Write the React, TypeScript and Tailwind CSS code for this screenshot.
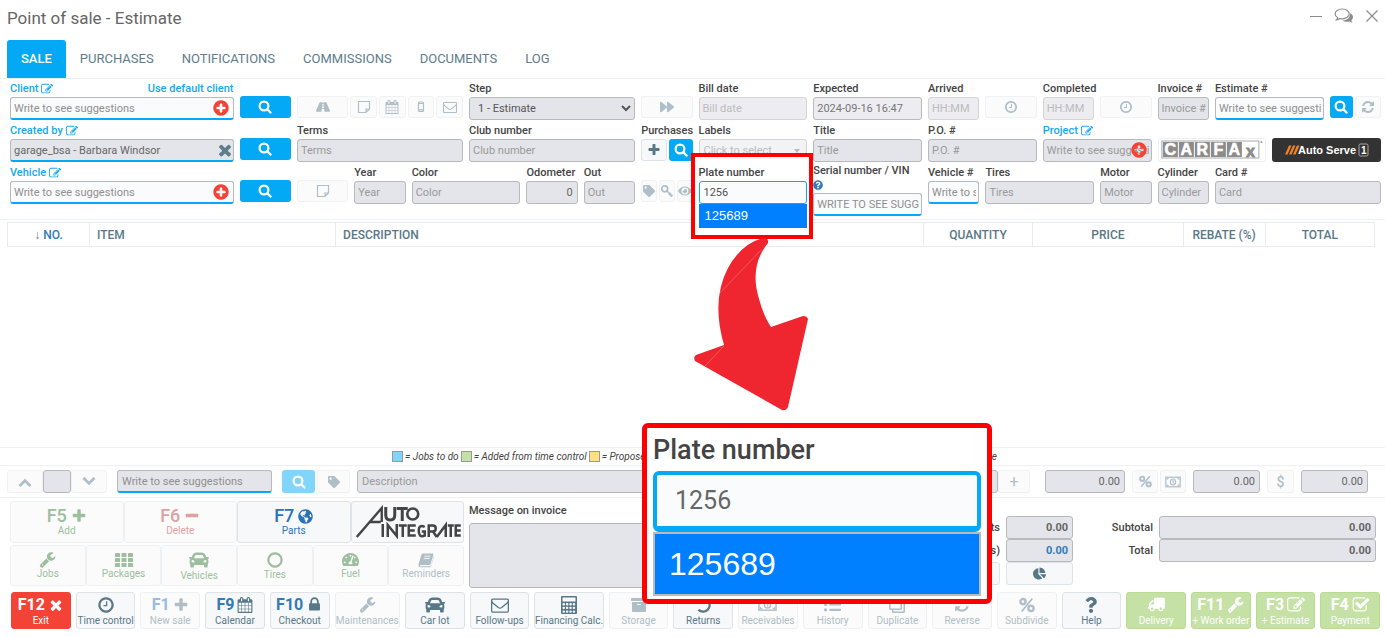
import React, { useId } from 'react';
import {
  FaArchive, FaCar, FaChartPie, FaEye, FaForward, FaGlobeAmericas,
  FaListUl, FaQuestion, FaQuestionCircle, FaRegClone, FaRoad, FaTachometerAlt, FaTag, FaTruck, FaUndo,
} from 'react-icons/fa';

const RING = 'q0 209-103 385.5t-279.5 279.5-385.5 103-385.5-103-279.5-279.5-103-385.5 103-385.5 279.5-279.5 385.5-103 385.5 103 279.5 279.5 103 385.5z';

const paths = {
  search: 'M1216 832q0-185-131.5-316.5t-316.5-131.5-316.5 131.5-131.5 316.5 131.5 316.5 316.5 131.5 316.5-131.5 131.5-316.5zm512 832q0 52-38 90t-90 38q-54 0-90-38l-343-342q-179 124-399 124-143 0-273.5-55.5t-225-150-150-225-55.5-273.5 55.5-273.5 150-225 225-150 273.5-55.5 273.5 55.5 225 150 150 225 55.5 273.5q0 220-124 399l343 343q37 37 37 90z',
  plus: 'M1600 736v192q0 40-28 68t-68 28h-416v416q0 40-28 68t-68 28h-192q-40 0-68-28t-28-68v-416h-416q-40 0-68-28t-28-68v-192q0-40 28-68t68-28h416v-416q0-40 28-68t68-28h192q40 0 68 28t28 68v416h416q40 0 68 28t28 68z',
  minus: 'M1600 736v192q0 40-28 68t-68 28h-1216q-40 0-68-28t-28-68v-192q0-40 28-68t68-28h1216q40 0 68 28t28 68z',
  times: 'M1490 1322q0 40-28 68l-136 136q-28 28-68 28t-68-28l-294-294-294 294q-28 28-68 28t-68-28l-136-136q-28-28-28-68t28-68l294-294-294-294q-28-28-28-68t28-68l136-136q28-28 68-28t68 28l294 294 294-294q28-28 68-28t68 28l136 136q28 28 28 68t-28 68l-294 294 294 294q28 28 28 68z',
  edit: 'M888 1184l116-116-152-152-116 116v56h96v96h56zm440-720q-16-16-33 1l-350 350q-17 17-1 33t33-1l350-350q17-17 1-33zm80 594v190q0 119-84.5 203.5t-203.5 84.5h-832q-119 0-203.5-84.5t-84.5-203.5v-832q0-119 84.5-203.5t203.5-84.5h832q63 0 117 25 15 7 18 23 3 17-9 29l-49 49q-14 14-32 8-23-6-45-6h-832q-66 0-113 47t-47 113v832q0 66 47 113t113 47h832q66 0 113-47t47-113v-126q0-13 9-22l64-64q15-15 35-7t20 29zm-96-738l288 288-672 672h-288v-288zm444 132l-92 92-288-288 92-92q28-28 68-28t68 28l152 152q28 28 28 68t-28 68z',
  wrench: 'M448 1472q0-26-19-45t-45-19-45 19-19 45 19 45 45 19 45-19 19-45zm644-420l-682 682q-37 37-90 37-52 0-91-37l-106-108q-38-36-38-90 0-53 38-91l681-681q39 98 114.5 173.5t173.5 114.5zm634-435q0 39-23 106-47 134-164.5 217.5t-258.5 83.5q-185 0-316.5-131.5t-131.5-316.5 131.5-316.5 316.5-131.5q58 0 121.5 16.5t107.5 46.5q16 11 16 28t-16 28l-293 169v224l193 107q5-3 79-48.5t135.5-81 70.5-35.5q15 0 23.5 10t8.5 25z',
  clock: 'M1024 544v448q0 14-9 23t-23 9h-320q-14 0-23-9t-9-23v-64q0-14 9-23t23-9h224v-352q0-14 9-23t23-9h64q14 0 23 9t9 23zm416 352q0-148-73-273t-198-198-273-73-273 73-198 198-73 273 73 273 198 198 273 73 273-73 198-198 73-273zm224 0' + RING,
  circle: 'M896 352q-148 0-273 73t-198 198-73 273 73 273 198 198 273 73 273-73 198-198 73-273-73-273-198-198-273-73zm768 544' + RING,
  plusCircle: 'M1344 960v-128q0-26-19-45t-45-19h-256v-256q0-26-19-45t-45-19h-128q-26 0-45 19t-19 45v256h-256q-26 0-45 19t-19 45v128q0 26 19 45t45 19h256v256q0 26 19 45t45 19h128q26 0 45-19t19-45v-256h256q26 0 45-19t19-45zm320-64' + RING,
  calendar: 'M192 1664h288v-288h-288v288zm352 0h320v-288h-320v288zm-352-352h288v-320h-288v320zm352 0h320v-320h-320v320zm-352-384h288v-288h-288v288zm736 736h320v-288h-320v288zm-384-736h320v-288h-320v288zm768 736h288v-288h-288v288zm-384-352h320v-320h-320v320zm-352-864v-288q0-13-9.5-22.5t-22.5-9.5h-64q-13 0-22.5 9.5t-9.5 22.5v288q0 13 9.5 22.5t22.5 9.5h64q13 0 22.5-9.5t9.5-22.5zm736 864h288v-320h-288v320zm-384-384h320v-288h-320v288zm384 0h288v-288h-288v288zm32-480v-288q0-13-9.5-22.5t-22.5-9.5h-64q-13 0-22.5 9.5t-9.5 22.5v288q0 13 9.5 22.5t22.5 9.5h64q13 0 22.5-9.5t9.5-22.5zm384-64v1280q0 52-38 90t-90 38h-1408q-52 0-90-38t-38-90v-1280q0-52 38-90t90-38h128v-96q0-66 47-113t113-47h64q66 0 113 47t47 113v96h384v-96q0-66 47-113t113-47h64q66 0 113 47t47 113v96h128q52 0 90 38t38 90z',
  envelope: 'M1664 1504v-768q-32 36-69 66-268 206-426 338-51 43-83 67t-86.5 48.5-102.5 24.5h-2q-48 0-102.5-24.5t-86.5-48.5-83-67q-158-132-426-338-37-30-69-66v768q0 13 9.5 22.5t22.5 9.5h1472q13 0 22.5-9.5t9.5-22.5zm0-1051v-24.5l-.5-13-3-12.5-5.5-9-9-7.5-14-2.5h-1472q-13 0-22.5 9.5t-9.5 22.5q0 168 147 284 193 152 401 317 6 5 35 29.5t46 37.5 44.5 31.5 50.5 27.5 43 9h2q20 0 43-9t50.5-27.5 44.5-31.5 46-37.5 35-29.5q208-165 401-317 54-43 100.5-115.5t46.5-131.5zm128-37v1088q0 66-47 113t-113 47h-1472q-66 0-113-47t-47-113v-1088q0-66 47-113t113-47h1472q66 0 113 47t47 113z',
  lock: 'M640 768h512v-192q0-106-75-181t-181-75-181 75-75 181v192zm832 96v576q0 40-28 68t-68 28h-960q-40 0-68-28t-28-68v-576q0-40 28-68t68-28h32v-192q0-184 132-316t316-132 316 132 132 316v192h32q40 0 68 28t28 68z',
  chevron: 'M1683 1331l-166 165q-19 19-45 19t-45-19l-531-531-531 531q-19 19-45 19t-45-19l-166-165q-19-19-19-45.5t19-45.5l742-741q19-19 45-19t45 19l742 741q19 19 19 45.5t-19 45.5z',
  check: 'M1472 930v318q0 119-84.5 203.5t-203.5 84.5h-832q-119 0-203.5-84.5t-84.5-203.5v-832q0-119 84.5-203.5t203.5-84.5h832q63 0 117 25 15 7 18 23 3 17-9 29l-49 49q-10 10-23 10-3 0-9-2-23-6-45-6h-832q-66 0-113 47t-47 113v832q0 66 47 113t113 47h832q66 0 113-47t47-113v-254q0-13 9-22l64-64q10-10 23-10 6 0 12 3 20 8 20 29zm231-489l-814 814q-24 24-57 24t-57-24l-430-430q-24-24-24-57t24-57l110-110q24-24 57-24t57 24l263 263 647-647q24-24 57-24t57 24l110 110q24 24 24 57t-24 57z',
  refresh: 'M1639 1056q0 5-1 7-64 268-268 434.5t-478 166.5q-146 0-282.5-55t-243.5-157l-129 129q-19 19-45 19t-45-19-19-45v-448q0-26 19-45t45-19h448q26 0 45 19t19 45-19 45l-137 137q71 66 161 102t187 36q134 0 250-65t186-179q11-17 53-117 8-23 30-23h192q13 0 22.5 9.5t9.5 22.5zm25-800v448q0 26-19 45t-45 19h-448q-26 0-45-19t-19-45 19-45l138-138q-148-137-349-137-134 0-250 65t-186 179q-11 17-53 117-8 23-30 23h-199q-13 0-22.5-9.5t-9.5-22.5v-7q65-268 270-434.5t480-166.5q146 0 284 55.5t245 156.5l130-129q19-19 45-19t45 19 19 45z',
};

function Icon({ name, className = 'size-4' }: { name: keyof typeof paths; className?: string }) {
  return (
    <svg viewBox="0 0 1792 1792" fill="currentColor" className={className} aria-hidden="true">
      <path d={paths[name]} />
    </svg>
  );
}

const Search = () => (
  <svg viewBox="0 0 14 14" fill="none" stroke="currentColor" strokeWidth="2.2" strokeLinecap="round" className="size-3.5" aria-hidden="true">
    <circle cx="6" cy="6" r="4.400" />
    <path d="M9.500 9.500l3 3" strokeWidth="2.400" />
  </svg>
);
const Note = ({ className = 'size-3.5' }) => (
  <svg viewBox="0 0 14 14" fill="none" stroke="currentColor" strokeWidth="1.2" className={className}>
    <path d="M1.5 1.5h11v7.5l-3.5 3.5h-7.5zM12.5 9H9v3.5" />
  </svg>
);
const Mobile = () => (
  <svg viewBox="0 0 14 14" fill="none" stroke="currentColor" strokeWidth="1.2" className="size-3.5">
    <rect x="4.5" y="2" width="5" height="9.5" rx="1" />
    <path d="M4.5 3.5h5M4.5 9.8h5" />
  </svg>
);
const Key = () => (
  <svg viewBox="0 0 14 14" fill="none" stroke="currentColor" strokeWidth="1.7" className="size-3.5">
    <circle cx="4.8" cy="4.8" r="3" />
    <path d="M7 7l5.5 5.5M9 11l2-2M10.8 12.6l1.8-1.8" />
  </svg>
);
const Percent = ({ className = 'size-4' }) => (
  <svg viewBox="0 0 16 16" fill="none" stroke="currentColor" strokeWidth="2.4" className={className}>
    <circle cx="4" cy="4.6" r="2.6" />
    <circle cx="12" cy="11.4" r="2.6" />
    <path d="M13.3 1.5L2.7 14.5" strokeWidth="1.8" />
  </svg>
);
const Money = ({ className = 'size-4' }) => (
  <svg viewBox="0 0 16 16" fill="none" stroke="currentColor" strokeWidth="1.2" className={className}>
    <rect x=".8" y="3.2" width="14.4" height="9.6" />
    <ellipse cx="8" cy="8" rx="2.6" ry="3" />
    <path d="M7.2 7l1-.8v3.6M2 6V4.5h1.6M14 6V4.5h-1.6M2 10v1.5h1.6M14 10v1.5h-1.6" strokeWidth=".9" />
  </svg>
);
const Dots = () => (
  <svg viewBox="0 0 18 16" fill="currentColor" className="h-4 w-[18px]">
    {[1, 6, 11].map((y) => [0, 6.5, 13].map((x) => <rect key={`${x}-${y}`} x={x} y={y} width="5" height="4" rx=".6" />))}
  </svg>
);
const Book = () => (
  <svg viewBox="0 0 16 16" className="size-4">
    <path d="M5.200 1.500h9.600q.9.300.6 1.200L12.600 12q-.3 1-1.400 1H2.500q-1 .4-.4 1.300h9.500q1.200 0 1.600-1.200L15.800 4l.1.900-2.700 9q-.5 1.400-1.900 1.400H2.400Q.2 14.600.3 12.900L3.400 2.800q.5-1.300 1.800-1.300z" fill="currentColor" />
    <path d="M6.300 4.200h6M5.700 6.400h6" stroke="#fbfbfc" strokeWidth=".9" />
  </svg>
);
const Calculator = () => (
  <svg viewBox="0 0 16 18" className="h-[18px] w-4">
    <rect x="0" y="0" width="16" height="18" rx="1" fill="currentColor" />
    <rect x="1.500" y="1.500" width="13" height="4" fill="#f6f8fa" />
    {[7, 10.700, 14.400].map((y) => [1.500, 4.900, 8.300, 11.700].map((x) => (
      <rect key={`${x}-${y}`} x={x} y={y} width="2.500" height="2.400" rx="1" fill="#f6f8fa" />
    )))}
  </svg>
);
const Chats = () => (
  <svg viewBox="0 0 20 16" className="h-4 w-5">
    <path d="M16 5.2c2 .8 3 2.3 3 3.9 0 1.300-.7 2.500-1.700 3.400.2.900.7 1.500 1.400 2.200-1.400 0-2.600-.4-3.500-1.100-2.600.5-5.200 0-6.700-1.400 4.200.2 7.900-2 7.500-7z" fill="#8d8d8d" />
    <path d="M8.200 1c4 0 7 2.200 7 4.900s-3 4.900-7 4.900c-.8 0-1.500-.1-2.200-.2-1 .7-2.200 1.200-3.500 1.200.7-.6 1.100-1.300 1.300-2.100C2.100 8.800 1.100 7.400 1.100 5.900 1.100 3.200 4.200 1 8.200 1z" fill="#fff" stroke="#8d8d8d" strokeWidth="1.200" />
  </svg>
);

const GRAY = 'border-[#b8b9bb] bg-[#e4e5ea] text-[#666] placeholder:text-[#999]';
const BLUE = 'border-[#b8b9bb] border-b-2 border-b-[#03a9f4] bg-[#fafbfc] text-[#666] placeholder:text-[#8f8f8f]';
const BLUEGRAY = 'border-[#b8b9bb] border-b-2 border-b-[#03a9f4] bg-[#e4e5ea] text-[#666] placeholder:text-[#8f8f8f]';
const DIM = 'border-[#d3d4d6] bg-[#ededf1] text-[#888] placeholder:text-[#bbb]';
const INPUT = 'block h-[23px] w-full min-w-0 rounded-[3px] border text-[11px] leading-4 outline-none ';
const LIGHT = 'flex items-center justify-center rounded-[3px] border border-[#f0f1f3] bg-[#fbfbfc] text-[#aebfc8] ';

type FieldProps = {
  label: string; span: string; tone?: string; ph?: string; value?: string;
  edit?: boolean; side?: string; right?: boolean; icon?: 'add' | 'clear';
};

function Field({ label, span, tone = GRAY, ph, value, edit, side, right, icon }: FieldProps) {
  const id = useId();
  return (
    <div className={span}>
      <div className={'flex h-4 items-center justify-between whitespace-nowrap text-[11px] font-medium ' + (edit ? 'text-[#17a8ee]' : 'text-[#444]')}>
        <label htmlFor={id} className="flex items-center gap-[3px]">
          {label}
          {edit && <Icon name="edit" className="size-3" />}
        </label>
        {side && <a href="#default">{side}</a>}
      </div>
      <div className="relative">
        <input
          id={id}
          placeholder={ph}
          defaultValue={value}
          className={INPUT + (right ? 'px-1 text-right ' : 'pr-0.5 pl-[3px] ') + tone}
        />
        {icon === 'add' && (
          <button type="button" aria-label={'Add ' + label} className="absolute top-0.5 right-1 text-[#f44336]">
            <Icon name="plusCircle" className="size-[18px]" />
          </button>
        )}
        {icon === 'clear' && (
          <button type="button" aria-label={'Clear ' + label} className="absolute top-0.5 right-0 text-[#607d8b]">
            <Icon name="times" className="size-[18px]" />
          </button>
        )}
      </div>
    </div>
  );
}

const SearchButton = ({ className = 'w-full' }) => (
  <button type="button" aria-label="Search" className={'flex h-[22px] items-center justify-center rounded-[3px] bg-[#03a9f4] text-white ' + className}>
    <Search />
  </button>
);

const Slot = ({ span, children }: { span: string; children: React.ReactNode }) => (
  <div className={'flex gap-0.5 pt-[15px] ' + span}>{children}</div>
);

const Light = ({ label, children, grow = 'grow' }: { label: string; children: React.ReactNode; grow?: string }) => (
  <button type="button" aria-label={label} className={LIGHT + 'h-[22px] min-w-0 basis-0 ' + grow}>{children}</button>
);

const ROW = 'grid h-[42px] grid-cols-[repeat(24,minmax(0,1fr))] gap-x-1.5';

function Carfax() {
  return (
    <svg viewBox="0 0 104 22" className="h-[22px] w-full">
      <g fontFamily="Liberation Sans, sans-serif" fontWeight="700" fontSize="16" textAnchor="middle">
        <rect x="1.500" y="2" width="97" height="17" fill="#fff" stroke="#aaa" strokeWidth="1" />
        {['C', 'A', 'R', 'F', 'A'].map((letter, i) => (
          <g key={i}>
            <rect x={2.500 + i * 16} y="3" width="15" height="15" fill="#8b8b8b" />
            <text x={10 + i * 16} y="16" fill="#fff" stroke="#fff" strokeWidth=".6">{letter}</text>
          </g>
        ))}
        <text x="90" y="18" fill="#8b8b8b" stroke="#8b8b8b" strokeWidth=".8">x</text>
      </g>
      <circle cx="101" cy="3" r="1" fill="#999" />
    </svg>
  );
}

function AutoServe() {
  return (
    <svg viewBox="0 0 84 16" className="h-4 w-[84px]">
      <path d="M0 12.500L4 3.500h2.500L2.500 12.500zM4 12.500l4-9h2.500l-4 9zM8 12.500l4-9h2.500l-4 9z" fill="#f58220" />
      <text x="13" y="12" fill="#fff" fontFamily="Liberation Sans, sans-serif" fontSize="11" fontWeight="700">Auto Serve</text>
      <rect x="74" y="2" width="9" height="12" rx="1.500" fill="none" stroke="#aaa" />
      <text x="76" y="12" fill="#fff" fontFamily="Liberation Sans, sans-serif" fontSize="10" fontWeight="700">1</text>
    </svg>
  );
}

function AutoIntegrate() {
  return (
    <svg viewBox="0 0 106 34" fill="none" stroke="#444" strokeWidth="3" className="h-[34px] w-full" aria-label="Auto Integrate">
      <path d="M2 32L27 3v14M14 17h12" strokeWidth="2.400" />
      <path d="M31 2v8q0 5 4.500 5t4.500-5V2M42 3.500h11M47.500 3v13" />
      <circle cx="58" cy="9" r="5.500" strokeWidth="2.600" />
      <path d="M28 19v13M33 32V20l9 11V19M44 20.500h8M48 20v12M61 20.500h-7v10h7M54 25.500h6M70 22q-6-3-6 4t6 4.500v-4h-3M74 32V20.500h4q3 0 3 3t-3 3h-4M78 26l4 6M82 32l9-12v12M93 20.500h6M96 20v12M106 20.500h-5v10h5M101 25.500h5" strokeWidth="2.500" />
    </svg>
  );
}

const columns: [string, string, string][] = [
  ['NO.', 'w-[6%]', 'text-center'],
  ['ITEM', 'w-[18%]', 'text-left'],
  ['DESCRIPTION', 'w-[43%]', 'text-left'],
  ['QUANTITY', 'w-[8%]', 'text-center'],
  ['PRICE', 'w-[11%]', 'text-center'],
  ['REBATE (%)', 'w-[6%]', 'text-center'],
  ['TOTAL', 'w-[8%]', 'text-center'],
];

const legend: [string, string][] = [
  ['= Jobs to do', 'bg-[#81d4fa]'],
  ['= Added from time control', 'bg-[#c5e1a5]'],
  ['= Proposed', 'bg-[#ffe082]'],
];

const TILE = 'flex min-w-0 flex-1 flex-col items-center justify-center rounded-[3px] border ';
const OFFTILE = TILE + 'border-[#eef1f3] bg-[#fbfbfc] ';
const ONTILE = TILE + 'border-[#dde3e8] bg-[#f6f8fa] ';

const OFF = 'border-[#eef1f3] bg-[#fbfbfc] text-[#b0bec5]';
const ON = 'border-[#dde3e8] bg-[#f6f8fa] text-[#587888]';
const GREEN = 'border-[#b9dc93] bg-[#c5e1a5] text-white';
type Action = { label: string; k?: string; kc?: string; icon: React.ReactNode; tone: string; grow?: string };
const actions: Action[] = [
  { label: 'Exit', k: 'F12', icon: <Icon name="times" />, tone: 'border-[#f44336] bg-[#f44336] text-white' },
  { label: 'Time control', icon: <Icon name="clock" className="size-[18px]" />, tone: ON },
  { label: 'New sale', k: 'F1', kc: 'text-[#9abbdc]', icon: <Icon name="plus" />, tone: OFF },
  { label: 'Calendar', k: 'F9', kc: 'text-[#337ab7]', icon: <Icon name="calendar" />, tone: ON },
  { label: 'Checkout', k: 'F10', kc: 'text-[#337ab7]', icon: <Icon name="lock" className="size-[17px]" />, tone: ON },
  { label: 'Maintenances', icon: <Icon name="wrench" className="size-[17px]" />, tone: OFF, grow: 'grow-[66]' },
  { label: 'Car lot', icon: <FaCar className="size-5" />, tone: ON },
  { label: 'Follow-ups', icon: <Icon name="envelope" className="size-[18px]" />, tone: ON },
  { label: 'Financing Calc.', icon: <Calculator />, tone: ON, grow: 'grow-[70]' },
  { label: 'Storage', icon: <FaArchive />, tone: OFF },
  { label: 'Returns', icon: <FaUndo />, tone: ON },
  { label: 'Receivables', icon: <Money className="size-[19px]" />, tone: OFF },
  { label: 'History', icon: <FaListUl className="size-[17px]" />, tone: OFF },
  { label: 'Duplicate', icon: <FaRegClone className="-scale-x-100" />, tone: OFF },
  { label: 'Reverse', icon: <Icon name="refresh" />, tone: OFF },
  { label: 'Subdivide', icon: <Percent />, tone: OFF },
  { label: 'Help', icon: <FaQuestion />, tone: ON },
  { label: 'Delivery', icon: <FaTruck className="size-[17px] -scale-x-100" />, tone: GREEN },
  { label: '+ Work order', k: 'F11', icon: <Icon name="wrench" className="size-[17px]" />, tone: GREEN },
  { label: '+ Estimate', k: 'F3', icon: <Icon name="edit" className="size-[18px]" />, tone: GREEN },
  { label: 'Payment', k: 'F4', icon: <Icon name="check" className="size-[18px]" />, tone: GREEN },
];

const amount = (bold = false) => INPUT + GRAY + ' px-1 text-right' + (bold ? ' font-bold' : '');
const KEY = 'flex items-center gap-1 text-lg leading-[18px] font-medium';

export default function App() {
  return (
    <div className="relative min-h-screen overflow-hidden bg-white font-['Roboto',sans-serif] text-[11px] leading-4 text-[#444]">
      <header className="flex h-10 items-start justify-between px-[7px] pt-1.5">
        <h1 className="text-[17px] leading-6 text-[#666]">Point of sale - Estimate</h1>
        <div className="flex items-center gap-3 pt-0.5 text-[#8d8d8d]">
          <button aria-label="Minimize" className="h-px w-3 bg-[#8d8d8d]" />
          <button aria-label="Messages"><Chats /></button>
          <button aria-label="Close">
            <svg viewBox="0 0 12 12" stroke="currentColor" strokeWidth="1.200" className="size-3"><path d="M.5.5l11 11M11.500.5l-11 11" /></svg>
          </button>
        </div>
      </header>

      <nav className="flex h-[39px] border-b border-[#eceff1] px-[7px] text-[13px] text-[#607d8b]">
        <a href="#sale" className="flex items-center rounded-t-[3px] bg-[#03a9f4] px-3.5 font-medium text-white">SALE</a>
        {['PURCHASES', 'NOTIFICATIONS', 'COMMISSIONS', 'DOCUMENTS', 'LOG'].map((t) => (
          <a key={t} href={'#' + t.toLowerCase()} className="flex items-center px-3.5">{t}</a>
        ))}
      </nav>

      <form className="h-[141px] border-b border-[#f0f1f3] pt-0.5 pr-1 pl-2.5">
        <div className={ROW}>
          <Field label="Client" span="col-span-4" tone={BLUE} ph="Write to see suggestions" edit side="Use default client" icon="add" />
          <Slot span=""><SearchButton /></Slot>
          <Slot span="col-span-3">
            <Light label="Road" grow="grow-[2]"><FaRoad className="size-3.5" /></Light>
            <Light label="Note"><Note /></Light>
            <Light label="Calendar"><Icon name="calendar" className="size-3.5" /></Light>
            <Light label="Text message"><Mobile /></Light>
            <Light label="E-mail"><Icon name="envelope" className="size-3.5" /></Light>
          </Slot>
          <div className="col-span-3">
            <label htmlFor="step" className="block font-medium">Step</label>
            <select id="step" className={INPUT + 'border-[#b8b9bb] bg-[#e4e5ea] pl-1 text-[#555]'}>
              <option>1 - Estimate</option>
            </select>
          </div>
          <Slot span=""><Light label="Next step"><FaForward className="size-3.5" /></Light></Slot>
          <Field label="Bill date" span="col-span-2" ph="Bill date" tone={DIM} />
          <Field label="Expected" span="col-span-2" value="2024-09-16 16:47" tone="border-[#b8b9bb] bg-[#ededf1] text-[#777]" />
          <Field label="Arrived" span="" ph="HH:MM" tone={DIM} />
          <Slot span=""><Light label="Set arrival"><Icon name="clock" className="size-3.5" /></Light></Slot>
          <Field label="Completed" span="" ph="HH:MM" tone={DIM} />
          <Slot span=""><Light label="Set completion"><Icon name="clock" className="size-3.5" /></Light></Slot>
          <Field label="Invoice #" span="" ph="Invoice #" />
          <Field label="Estimate #" span="col-span-2" ph="Write to see suggestions" tone={BLUE} />
          <Slot span="">
            <SearchButton className="flex-1" />
            <Light label="Refresh"><Icon name="refresh" className="size-3.5" /></Light>
          </Slot>
        </div>

        <div className={ROW}>
          <Field label="Created by" span="col-span-4" tone={BLUEGRAY} value="garage_bsa - Barbara Windsor" edit icon="clear" />
          <Slot span=""><SearchButton /></Slot>
          <Field label="Terms" span="col-span-3" ph="Terms" />
          <Field label="Club number" span="col-span-3" ph="Club number" />
          <div>
            <div className="font-medium whitespace-nowrap">Purchases</div>
            <div className="flex gap-0.5">
              <button type="button" aria-label="Add purchase" className="flex h-[22px] flex-1 items-center justify-center rounded-[3px] border border-[#dde3e8] bg-[#f6f8fa] text-[#587888]"><Icon name="plus" className="size-3.5" /></button>
              <SearchButton className="flex-1" />
            </div>
          </div>
          <div className="col-span-2">
            <label htmlFor="labels" className="block font-medium">Labels</label>
            <div className="relative">
              <select id="labels" className={INPUT + 'appearance-none border-[#d3d4d6] bg-[#f3f3f5] px-1 text-[#bbb]'}>
                <option>Click to select</option>
              </select>
              <svg viewBox="0 0 6 4" fill="#bbb" className="absolute top-2.5 right-[7px] h-1 w-1.5"><path d="M0 0h6L3 4z" /></svg>
            </div>
          </div>
          <Field label="Title" span="col-span-2" ph="Title" />
          <Field label="P.O. #" span="col-span-2" ph="P.O. #" />
          <Field label="Project" span="col-span-2" ph="Write to see suggestions" edit icon="add" />
          <Slot span="col-span-2"><button type="button" aria-label="Carfax" className="h-6 w-full rounded-[3px] border border-[#eef1f3]"><Carfax /></button></Slot>
          <Slot span="col-span-2"><button type="button" aria-label="Auto Serve 1" className="flex h-6 w-full items-center justify-center rounded-[3px] bg-[#333]"><AutoServe /></button></Slot>
        </div>

        <div className={ROW}>
          <Field label="Vehicle" span="col-span-4" tone={BLUE} ph="Write to see suggestions" edit icon="add" />
          <Slot span=""><SearchButton /></Slot>
          <Slot span=""><Light label="Vehicle note"><Note /></Light></Slot>
          <Field label="Year" span="" ph="Year" />
          <Field label="Color" span="col-span-2" ph="Color" />
          <Field label="Odometer" span="" value="0" right />
          <Field label="Out" span="" ph="Out" />
          <Slot span="">
            <Light label="Tag"><FaTag className="size-3" /></Light>
            <Light label="Key"><Key /></Light>
            <Light label="View"><FaEye className="size-3.5" /></Light>
          </Slot>
          <div className="relative col-span-2">
            <div className="absolute -top-3 -right-1.5 -left-2 h-[86px] border-4 border-[#fe0000] bg-white" />
            <div className="relative">
              <label htmlFor="plate" className="block font-medium">Plate number</label>
              <input id="plate" defaultValue="1256" className={INPUT + 'border-[#03a9f4] bg-[#fafbfc] px-1 text-[#555]'} />
              <button type="button" className="block h-6 w-full bg-[#007fff] px-1.5 text-left font-['Liberation_Sans',sans-serif] text-[13px] text-white">125689</button>
            </div>
          </div>
          <div className="col-span-2">
            <label htmlFor="vin" className="block h-3 leading-3 font-medium whitespace-nowrap">Serial number / VIN</label>
            <FaQuestionCircle className="my-[3px] size-2.5 text-[#337ab7]" />
            <input id="vin" placeholder="WRITE TO SEE SUGGESTIONS" className={INPUT + 'pr-0.5 pl-[3px] ' + BLUE} />
          </div>
          <Field label="Vehicle #" span="" ph="Write to see suggestions" tone={BLUE} />
          <Field label="Tires" span="col-span-2" ph="Tires" />
          <Field label="Motor" span="" ph="Motor" />
          <Field label="Cylinder" span="" ph="Cylinder" />
          <Field label="Card #" span="col-span-3" ph="Card" />
        </div>
      </form>

      <div className="h-[227px] pt-0.5 pr-2.5 pl-[7px]">
        <table className="w-full table-fixed border-collapse">
          <thead>
            <tr>
              {columns.map(([name, width, align], i) => (
                <th key={name} className={'h-6 border border-[#e6ecf2] px-[7px] text-xs font-medium whitespace-nowrap text-[#587888] ' + width + ' ' + align}>
                  {i === 0 ? <span className="text-[#337ab7]"><span className="text-[#587888]">↓</span> {name}</span> : name}
                </th>
              ))}
            </tr>
          </thead>
        </table>
      </div>

      <div className="border-y border-[#eff0f1]">
        <div className="mx-auto flex h-[17px] w-[609px] items-center justify-between pl-1 text-[10px] italic">
          <div className="flex gap-0.5">
            {legend.map(([text, color]) => (
              <span key={text} className="flex items-center gap-0.5 whitespace-nowrap">
                <i className={'size-[11px] border border-[#999] ' + color} />{text}
              </span>
            ))}
          </div>
          <span>= Done</span>
        </div>
      </div>

      <div className="flex h-8 items-center border-b border-[#eff0f1] pr-[17px] pl-[7px]">
        <button aria-label="Move up" className={LIGHT + 'h-[23px] w-9'}><Icon name="chevron" className="size-3.5" /></button>
        <input aria-label="Line number" className={INPUT + GRAY + ' max-w-7 shrink-0'} />
        <button aria-label="Move down" className={LIGHT + 'mr-2.5 h-[23px] w-9'}><Icon name="chevron" className="size-3.5 rotate-180" /></button>
        <input aria-label="Item" placeholder="Write to see suggestions" className={INPUT + BLUEGRAY + ' max-w-[155px] shrink-0 px-1'} />
        <button aria-label="Search item" className="mr-0.5 ml-2.5 flex h-[23px] w-[33px] shrink-0 items-center justify-center rounded-[3px] bg-[#81d4fa] text-white"><Search /></button>
        <button aria-label="Item tag" className={LIGHT + 'mr-[7px] h-[23px] w-[33px] shrink-0'}><FaTag className="size-3" /></button>
        <input aria-label="Description" placeholder="Description" className={INPUT + GRAY + ' flex-1 px-1'} />
        <button aria-label="Add line" className={LIGHT + 'mr-[15px] h-[23px] w-8 shrink-0 text-base'}>+</button>
        <input aria-label="Price" defaultValue="0.00" className={amount() + ' max-w-20 shrink-0'} />
        <button aria-label="Percent" className={LIGHT + 'mr-0.5 ml-[7px] h-[23px] w-[26px] shrink-0'}><Percent className="size-[13px]" /></button>
        <button aria-label="Cash" className={LIGHT + 'mr-[7px] h-[23px] w-[26px] shrink-0'}><Money /></button>
        <input aria-label="Rebate" defaultValue="0.00" className={amount() + ' max-w-[67px] shrink-0'} />
        <button aria-label="Currency" className={LIGHT + 'mx-[7px] h-[23px] w-[27px] shrink-0 text-sm font-medium'}>$</button>
        <input aria-label="Line total" defaultValue="0.00" className={amount() + ' max-w-[67px] shrink-0'} />
      </div>

      <div className="grid grid-cols-[454fr_355fr_276fr_281fr] pt-[3px] pr-[9px] pl-2.5">
        <div className="flex min-w-0 flex-col gap-0.5">
          <div className="flex h-[42px]">
            <button className={OFFTILE + 'text-[#9dbf9d]'}><span className={KEY}>F5<Icon name="plus" /></span><span className="text-[10px] leading-3">Add</span></button>
            <button className={OFFTILE + 'text-[#dda2a0]'}><span className={KEY}>F6<Icon name="minus" /></span><span className="text-[10px] leading-3">Delete</span></button>
            <button className={ONTILE + 'text-[#2a73b8]'}><span className={KEY}>F7<FaGlobeAmericas className="size-[15px]" /></span><span className="text-[10px] leading-3">Parts</span></button>
            <button aria-label="Auto Integrate" className={ONTILE}><AutoIntegrate /></button>
          </div>
          <div className="flex h-[41px] text-[10px] leading-3 text-[#9dbf9d]">
            <button className={OFFTILE}><Icon name="wrench" className="size-[17px]" />Jobs</button>
            <button className={OFFTILE}><Dots />Packages</button>
            <button className={OFFTILE}><FaCar className="size-5" />Vehicles</button>
            <button className={OFFTILE}><Icon name="circle" className="size-[18px]" />Tires</button>
            <button className={OFFTILE}><FaTachometerAlt className="size-[17px]" />Fuel</button>
            <button className={OFFTILE + 'text-[#b0bec5]'}><Book />Reminders</button>
          </div>
        </div>
        <div className="min-w-0 pt-0.5 pl-[5px]">
          <label htmlFor="message" className="block h-5 font-medium">Message on invoice</label>
          <textarea id="message" className="block h-[65px] w-full resize-none rounded-[3px] border border-[#b8b9bb] bg-[#e4e5ea]" />
        </div>
        <div className="grid grid-cols-[1fr_67px] content-start gap-x-1.5 pt-[15px] pr-[22px] pl-2">
          <label htmlFor="parts" className="self-center text-right font-medium">Parts</label>
          <input id="parts" defaultValue="0.00" className={amount(true)} />
          <label htmlFor="labor" className="self-center text-right font-medium">Labor(s)</label>
          <input id="labor" defaultValue="0.00" className={INPUT + 'border-[#b8b9bb] bg-[#e4e5ea] px-1 text-right font-bold text-[#337ab7]'} />
          <button aria-label="Details" className="h-[23px] rounded-[3px] border border-[#dde3e8] bg-[#f6f8fa]" />
          <button aria-label="Chart" className="flex h-[23px] items-center justify-center rounded-[3px] border border-[#dde3e8] bg-[#f6f8fa] text-[#587888]"><FaChartPie className="size-[13px]" /></button>
        </div>
        <div className="grid grid-cols-[1fr_217px] content-start gap-x-1.5 pt-[15px]">
          <label htmlFor="subtotal" className="self-center text-right font-medium">Subtotal</label>
          <input id="subtotal" defaultValue="0.00" className={amount(true)} />
          <label htmlFor="total" className="self-center text-right font-medium">Total</label>
          <input id="total" defaultValue="0.00" className={amount(true)} />
        </div>
      </div>

      <footer className="flex gap-[5px] pt-1 pr-[5px] pb-2 pl-[11px]">
        {actions.map((a) => (
          <button key={a.label} className={'flex h-[37px] min-w-0 basis-0 flex-col items-center justify-center rounded-[3px] border whitespace-nowrap ' + (a.grow ?? 'grow-[60]') + ' ' + a.tone}>
            <span className="flex h-5 items-center gap-[3px] text-base leading-5 font-bold">
              {a.k && <span className={a.kc ?? ''}>{a.k}</span>}
              {a.icon}
            </span>
            <span className="text-[10px] leading-3">{a.label}</span>
          </button>
        ))}
      </footer>

      <svg viewBox="0 0 140 190" className="pointer-events-none absolute top-[230px] left-[680px] h-[190px] w-[140px]">
        <path d="M83 8q6 0 5 5Q69 36 79 69q5 18 12 28l32-11q4 0 5 3l-20 88q-2 4-6 3L15 131q-2-4 1-6l28-10Q31 70 48 38 61 14 83 8z" fill="#ef252f" />
        <path d="M81 20L39 64M44 116L25 136" stroke="#f58a8e" strokeWidth=".5" />
      </svg>

      <section className="absolute top-[423px] left-[642px] w-[350px] rounded-md border-[5px] border-[#fe0000] bg-white px-1.5 pt-1.5 pb-[3px]">
        <label htmlFor="plate-large" className="block h-[37px] text-[27px] leading-8 font-medium">Plate number</label>
        <input id="plate-large" defaultValue="1256" className="block h-[61px] w-full rounded-md border-4 border-b-[6px] border-[#03a9f4] bg-[#fafbfc] px-[18px] text-[25px] text-[#666] outline-none" />
        <button className="block h-[64px] w-full border-2 border-[#bbb] bg-[#007fff] px-3.5 text-left font-['Liberation_Sans',sans-serif] text-[32px] text-white">125689</button>
      </section>
    </div>
  );
}
